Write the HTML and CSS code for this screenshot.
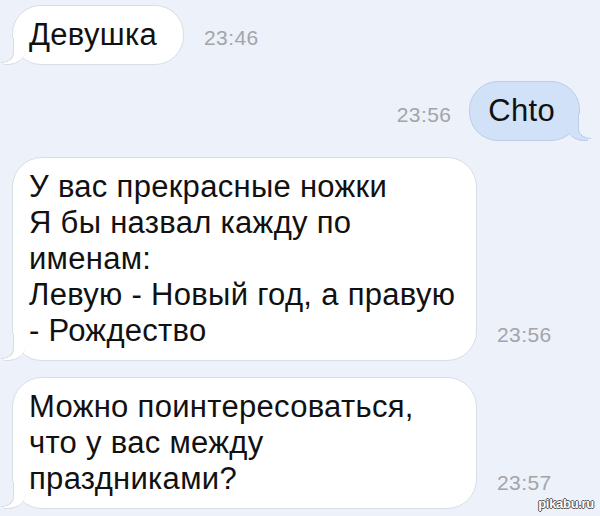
FILE: index.html
```html
<!DOCTYPE html>
<html lang="ru">

<head>
    <meta charset="UTF-8">
    <meta name="viewport" content="width=device-width, initial-scale=1.0">
    <title>Переписка</title>
    <link rel="stylesheet" href="styles.css">
</head>

<body>
    <div class="chat">
        <div class="row row-in first">
            <div class="bubble in">Девушка</div>
            <span class="time">23:46</span>
        </div>

        <div class="row row-out">
            <span class="time">23:56</span>
            <div class="bubble out">Chto</div>
        </div>

        <div class="row row-in">
            <div class="bubble in wide">У вас прекрасные ножки<br>Я бы назвал кажду по<br>именам:<br>Левую - Новый год, а правую<br>- Рождество</div>
            <span class="time">23:56</span>
        </div>

        <div class="row row-in">
            <div class="bubble in wide">Можно поинтересоваться,<br>что у вас между<br>праздниками?</div>
            <span class="time">23:57</span>
        </div>
    </div>

    <div class="mark">pikabu.ru</div>
</body>

</html>
```

FILE: styles.css
```css
body {
    font-family: "Liberation Sans", Arial, sans-serif;
    background-color: #edf1f9;
    margin: 0;
    height: 516px;
    overflow: hidden;
    position: relative;
}

.chat {
    display: flex;
    flex-direction: column;
    gap: 16px;
    padding: 5px 20px 0 12px;
}

.row {
    display: flex;
    align-items: flex-end;
    gap: 18px;
}

.row-out {
    justify-content: flex-end;
}

.bubble {
    position: relative;
    font-size: 31px;
    letter-spacing: 0.3px;
    line-height: 36px;
    color: #111;
    padding: 11px 26px 11px 16px;
    border-radius: 29px;
    border: 1px solid #d9dde5;
    background-color: #fff;
}

.bubble.wide {
    width: 429px;
    padding-right: 18px;
    border-radius: 30px;
}

.bubble.in::before {
    content: "";
    position: absolute;
    left: -9px;
    bottom: -1px;
    width: 22px;
    height: 22px;
    background-color: #fff;
    border-bottom: 1px solid #d9dde5;
    border-bottom-right-radius: 18px 16px;
    z-index: 1;
}

.bubble.in::after {
    content: "";
    position: absolute;
    left: -12px;
    bottom: 1px;
    width: 12px;
    height: 24px;
    background-color: #edf1f9;
    border-bottom-right-radius: 12px 10px;
    border-right: 1px solid #d9dde5;
    border-bottom: 1px solid #d9dde5;
    z-index: 2;
}

.bubble.out {
    background-color: #d0e1f8;
    border-color: #bccde6;
    padding: 11px 24px 11px 18px;
}

.bubble.out::before {
    content: "";
    position: absolute;
    right: -9px;
    bottom: -1px;
    width: 22px;
    height: 22px;
    background-color: #d0e1f8;
    border-bottom: 1px solid #bccde6;
    border-bottom-left-radius: 18px 16px;
    z-index: 1;
}

.bubble.out::after {
    content: "";
    position: absolute;
    right: -12px;
    bottom: 1px;
    width: 12px;
    height: 24px;
    background-color: #edf1f9;
    border-bottom-left-radius: 12px 10px;
    border-left: 1px solid #bccde6;
    border-bottom: 1px solid #bccde6;
    z-index: 2;
}

.time {
    font-size: 21px;
    letter-spacing: 0.4px;
    color: #a2a5aa;
    margin-bottom: 14px;
}

.row-in.first .time {
    margin-bottom: 15px;
}

.row-in .time {
    margin-left: 2px;
}

.mark {
    position: absolute;
    right: 6px;
    bottom: 5px;
    font-size: 13px;
    font-weight: bold;
    color: #fff;
    letter-spacing: -0.3px;
    text-shadow: 1px 0 0 #555, -1px 0 0 #555, 0 1px 0 #555, 0 -1px 0 #555;
}
```
